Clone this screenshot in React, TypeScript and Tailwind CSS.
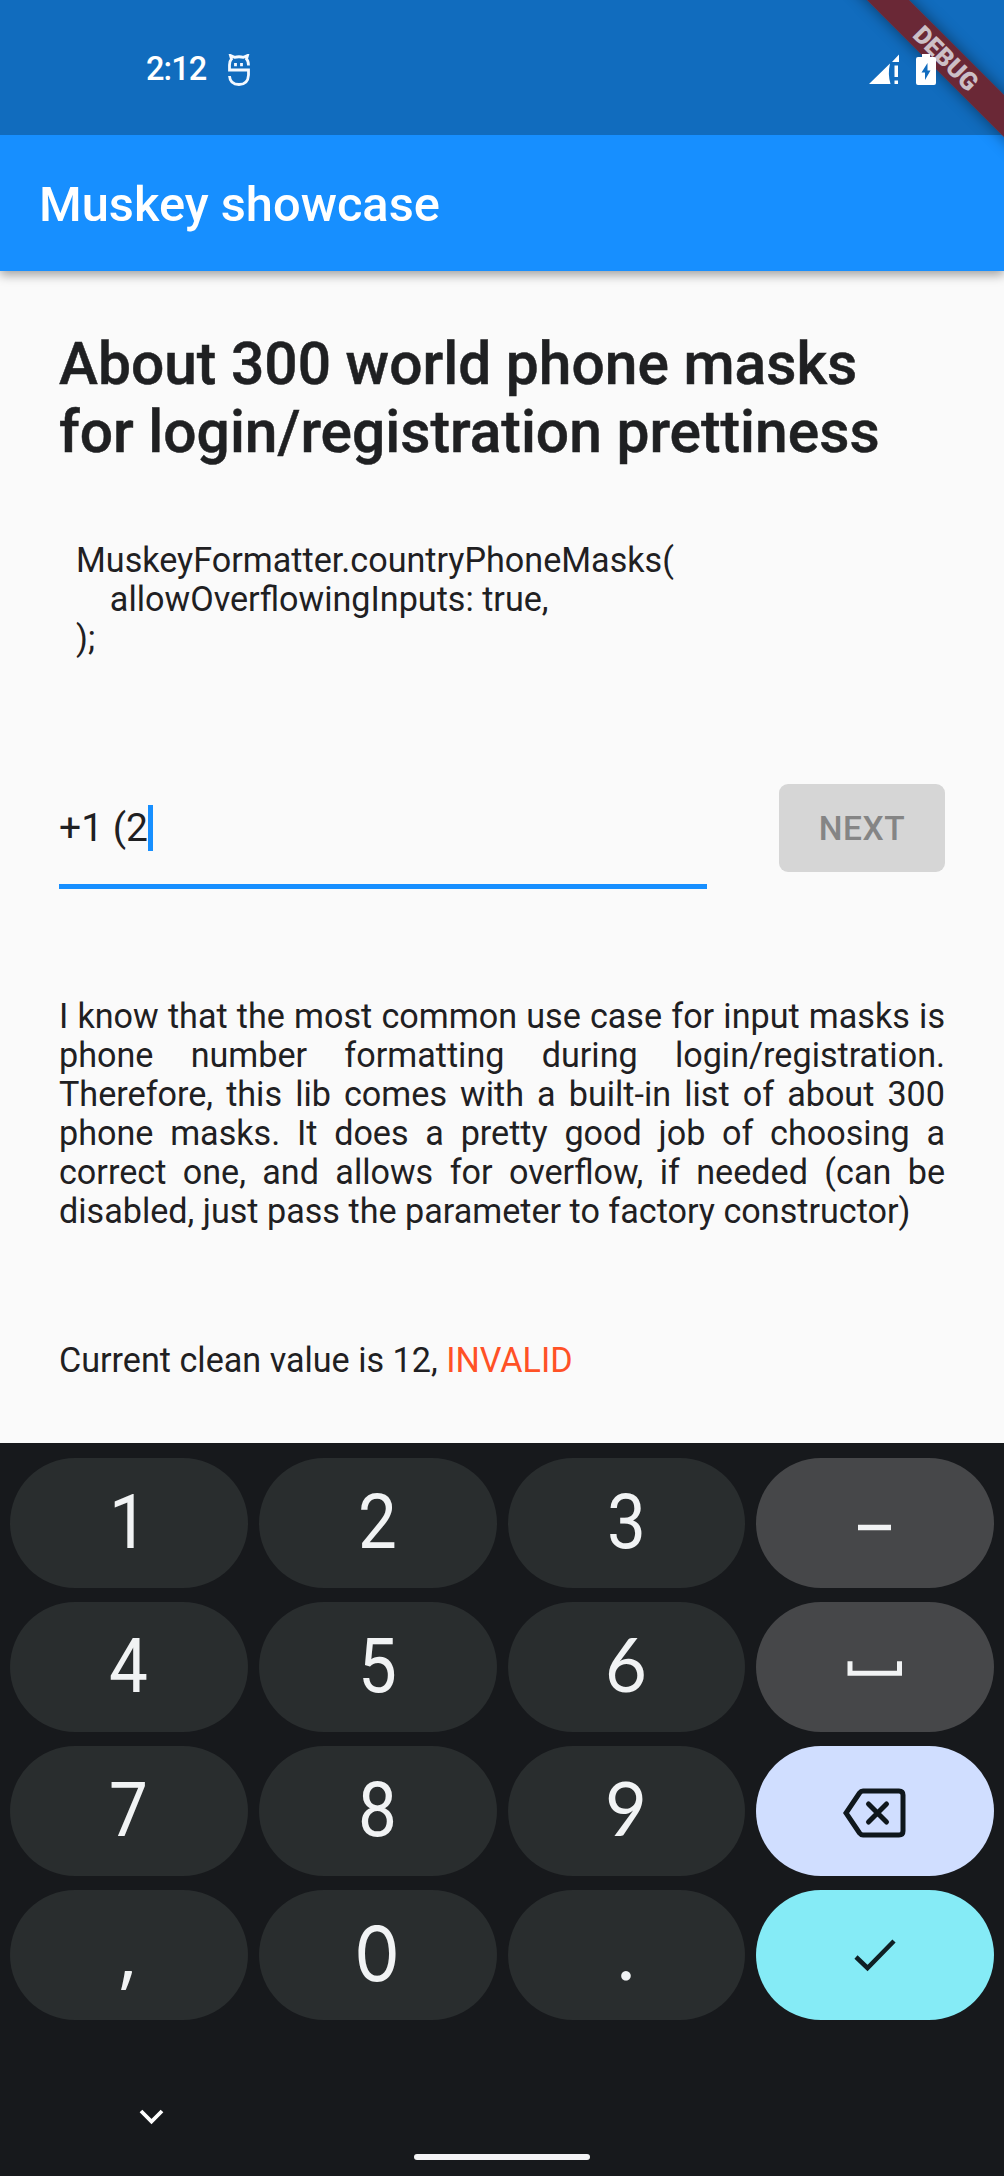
import type { ReactNode } from "react";

type Key = { label: ReactNode; tone?: string; font?: string };

const MinusIcon = () => (
  <svg width="60" height="40" viewBox="0 0 60 40" className="mt-[14px]">
    <path d="M13 17.500h33" stroke="#f1f3f4" strokeWidth="5.500" />
  </svg>
);

const SpaceIcon = () => (
  <svg width="60" height="40" viewBox="0 0 60 40">
    <path d="M5 14.300v12h49.500v-12" fill="none" stroke="#f1f3f4" strokeWidth="5" />
  </svg>
);

const BackspaceIcon = () => (
  <svg width="64" height="52" viewBox="0 0 64 52" className="mt-[4px]" fill="none" stroke="#0f171c" strokeWidth="5">
    <path d="M20 4h36q4 0 4 4v36q0 4-4 4H20q-2 0-3.500-2L3 26 16.500 6Q18 4 20 4z" />
    <path d="M25.500 17l18 18M43.500 17l-18 18" strokeLinecap="round" />
  </svg>
);

const CheckIcon = () => (
  <svg width="44" height="34" viewBox="0 0 44 34" fill="none" stroke="#0f1f24" strokeWidth="4.500">
    <path d="M3 19l11.500 11L41 3" />
  </svg>
);

const roboto = "-mt-[2px] -ml-[1px] scale-x-[0.91] font-[Roboto]";
const lato = "-mt-[8px] -ml-[1px] scale-x-95 font-[Lato]";

const keys: Key[] = [
  { label: "1", font: roboto },
  { label: "2", font: roboto },
  { label: "3", font: roboto },
  { label: <MinusIcon />, tone: "bg-[#464749]" },
  { label: "4", font: roboto },
  { label: "5", font: roboto },
  { label: "6", font: lato },
  { label: <SpaceIcon />, tone: "bg-[#464749]" },
  { label: "7", font: roboto },
  { label: "8", font: roboto },
  { label: "9", font: lato },
  { label: <BackspaceIcon />, tone: "bg-[#d0deff]" },
  { label: ",", font: "-mt-[8px] -ml-[2px] font-['Open_Sans']" },
  { label: "0", font: "-mt-[5px] -ml-[1px] scale-x-95 font-[Inter]" },
  { label: ".", font: "-mt-[8px] -ml-[1px] font-[Lato]" },
  { label: <CheckIcon />, tone: "bg-[#85ebf6]" },
];

function StatusBar() {
  return (
    <div className="flex h-[135px] items-start bg-[#116cbe] pl-[146px]">
      <span className="mt-[49px] w-[60px] text-[32.500px] leading-[40px] font-medium tracking-[-0.9px] whitespace-nowrap">
        2:12
      </span>
      <svg className="mt-[54px] ml-[21px]" width="24" height="34" viewBox="0 0 24 34" fill="none" stroke="#f4f9ff" strokeWidth="2.800">
        <path d="M21.500 11.500Q21.500 7 19.500 5L20.500 1.500 16.500 3.300Q12 2.200 7.500 3.300L3.500 1.500 4.500 5Q2.500 7 2.500 11v5H21.500v5q-.5 9.500-9.500 9.500T2.500 22" />
        <path d="M8.500 9v3.200M14.500 9v3.200" strokeWidth="2.800" />
      </svg>
      <svg className="z-10 mt-[54px] ml-[617px]" width="32" height="32" viewBox="0 0 32 32" fill="#fff">
        <path d="M1 30L22 9.500Q19.500 20 22.500 30zM24 8l7-7.500V8zM26.500 11.500H30V23h-3.500zM26.500 26.500H30V30h-3.500z" />
      </svg>
      <svg className="z-10 mt-[54px] ml-[16px]" width="20" height="32" viewBox="0 0 20 32" fill="#fff">
        <path d="M6 0h8v3h4q2 0 2 2v24q0 2-2 2H2q-2 0-2-2V5q0-2 2-2h4z" />
        <path d="M11.500 9L5.500 18.500H9V26l5.500-9.500H11.500z" fill="#116cbe" />
      </svg>
    </div>
  );
}

export default function App() {
  return (
    <div className="relative flex h-[2176px] w-[1004px] flex-col overflow-hidden bg-[#fafafa] font-[Roboto,sans-serif] text-[#1f2022]">
      <header className="relative z-10 text-white shadow-[0_4px_10px_rgba(0,0,0,0.36)]">
        <StatusBar />
        <div className="flex h-[136px] items-center bg-[#178fff] pt-[3px] pl-[39px]">
          <h1 className="text-[48.800px] leading-[58px] font-medium">Muskey showcase</h1>
        </div>
        <div className="absolute top-[42px] left-[795px] flex h-[30px] w-[300px] rotate-45 items-center justify-center bg-[#70252e]/95 pl-[3px] text-[25px] leading-none font-black text-[#ccbfc6] shadow-[0_0_15px_rgba(0,0,0,0.45)]">
          DEBUG
        </div>
      </header>

      <main className="flex h-[1172px] flex-col px-[59px] pt-[59px]">
        <h2 className="text-[58.700px] leading-[68px] font-medium whitespace-nowrap [-webkit-text-stroke:0.5px_#1f2022]">
          About 300 world phone masks
          <br />
          for login/registration prettiness
        </h2>

        <pre className="mt-[75px] pl-[17px] font-[Roboto,sans-serif] text-[34.150px] leading-[39px]">
          {"MuskeyFormatter.countryPhoneMasks(\n    allowOverflowingInputs: true,\n);"}
        </pre>

        <div className="mt-[124px] flex items-start justify-between">
          <div className="flex h-[107px] w-[648px] items-start border-b-[5px] border-[#178fff] pt-[23px]">
            <span className="text-[39px] leading-[46px]">+1 (2</span>
            <span className="h-[46px] w-[5px] bg-[#178fff]" />
          </div>
          <button className="mt-[2px] h-[88px] w-[166px] rounded-[9px] bg-[#d6d6d6] pt-[2px] text-[33.500px] font-medium tracking-[0.600px] text-[#858585]">
            NEXT
          </button>
        </div>

        <p className="mt-[108px] text-justify text-[34.150px] leading-[39px]">
          I know that the most common use case for input masks is phone number formatting during
          login/registration. Therefore, this lib comes with a built-in list of about 300 phone masks. It does a
          pretty good job of choosing a correct one, and allows for overflow, if needed (can be disabled, just pass
          the parameter to factory constructor)
        </p>

        <p className="mt-[110px] text-[34.150px] leading-[39px]">
          Current clean value is 12, <span className="text-[#ff5126]">INVALID</span>
        </p>
      </main>

      <section className="flex flex-1 flex-col bg-[#17191c] px-[10px] pt-[15px]">
        <div className="grid grid-cols-4 gap-x-[11px] gap-y-[14px]">
          {keys.map((key, i) => (
            <button
              key={i}
              className={`flex h-[130px] items-center justify-center rounded-full text-[76px] leading-[90px] text-[#f1f3f4] ${key.tone ?? "bg-[#292d2e]"}`}
            >
              {typeof key.label === "string" ? <span className={key.font}>{key.label}</span> : key.label}
            </button>
          ))}
        </div>
        <div className="mt-auto flex flex-col pb-[16px]">
          <svg className="ml-[129px]" width="26" height="18" viewBox="0 0 26 18" fill="none" stroke="#fff" strokeWidth="3.800">
            <path d="M2 3l10.500 10.500L23 3" />
          </svg>
          <div className="mt-[28px] ml-[403.500px] h-[6px] w-[176px] rounded-full bg-[#f3f3f5]" />
        </div>
      </section>
    </div>
  );
}
